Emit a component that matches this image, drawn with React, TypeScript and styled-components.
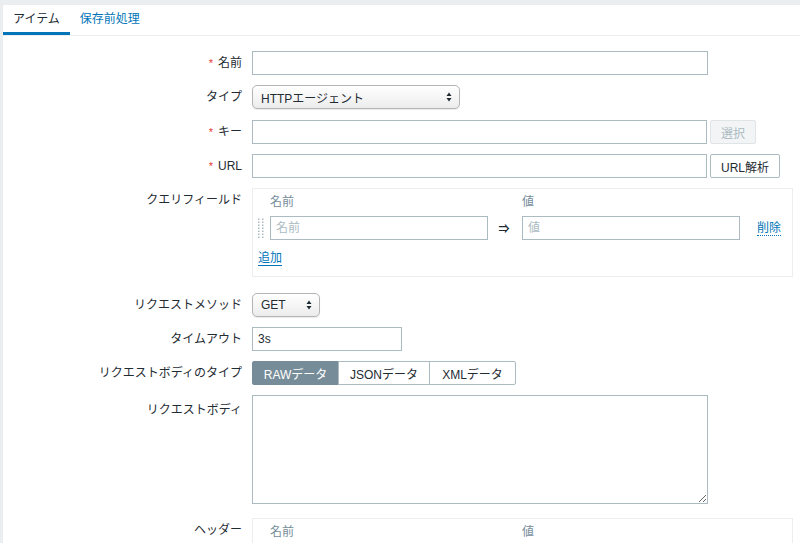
import React from "react";
import styled, { createGlobalStyle, css } from "styled-components";

const GlobalStyle = createGlobalStyle`
  html, body {
    margin: 0;
    padding: 0;
    background: #ebeef0;
  }
  body {
    font-family: "Liberation Sans", Arial, "Noto Sans CJK JP", sans-serif;
    font-size: 12px;
    color: #1f2c33;
  }
  * { box-sizing: border-box; }
`;

const Page = styled.div`
  padding: 5px 0 0 3px;
  height: 543px;
  overflow: hidden;
`;

const Panel = styled.div`
  background: #ffffff;
  min-height: 538px;
`;

const TabBar = styled.ul`
  list-style: none;
  margin: 0;
  padding: 0;
  display: flex;
  height: 31px;
  border-bottom: 1px solid #ebeef0;
`;

const Tab = styled.li<{ $active?: boolean }>`
  padding: 0 10px;
  line-height: 28px;
  font-size: 12px;
  border-bottom: 3px solid ${(p) => (p.$active ? "#0275b8" : "transparent")};
  color: ${(p) => (p.$active ? "#1f2c33" : "#0275b8")};
`;

const Form = styled.div`
  display: grid;
  grid-template-columns: 239px 1fr;
  column-gap: 10px;
  row-gap: 10px;
  padding: 15px 7px 0 0;
`;

const Label = styled.div<{ $offset?: number }>`
  text-align: right;
  line-height: 24px;
  padding-top: ${(p) => p.$offset ?? 0}px;
  white-space: nowrap;
`;

const Req = styled.span`
  color: #e33734;
  margin-right: 5px;
  font-size: 11px;
`;

const Field = styled.div<{ $height?: number }>`
  display: flex;
  align-items: flex-start;
  height: ${(p) => p.$height ?? 24}px;
`;

const TextInput = styled.input<{ $width: number }>`
  width: ${(p) => p.$width}px;
  height: 24px;
  border: 1px solid #acbbc2;
  border-radius: 0;
  padding: 0 5px;
  font: inherit;
  color: #1f2c33;
  background: #fff;
  outline: none;
  &::placeholder {
    color: #acbbc2;
  }
`;

const SelectBox = styled.div<{ $width: number }>`
  width: ${(p) => p.$width}px;
  height: 24px;
  border: 1px solid #b4b4b4;
  border-radius: 5px;
  background: linear-gradient(#ffffff, #ececec);
  box-shadow: 0 1px 1px rgba(0, 0, 0, 0.08);
  display: flex;
  align-items: center;
  justify-content: space-between;
  padding: 0 7px 0 8px;
  color: #1f2c33;
`;

const Button = styled.button<{ $disabled?: boolean }>`
  height: 24px;
  margin-left: 3px;
  padding: 0 10px;
  font: inherit;
  border-radius: 2px;
  ${(p) =>
    p.$disabled
      ? css`
          border: 1px solid #dfe4e7;
          background: #f2f4f5;
          color: #acbbc2;
        `
      : css`
          border: 1px solid #acbbc2;
          background: #fff;
          color: #1f2c33;
        `}
`;

const TableBox = styled.div<{ $gapBelow?: number }>`
  border: 1px solid #ebeef0;
  padding: 6px 5px 10px 5px;
  margin-bottom: ${(p) => p.$gapBelow ?? 0}px;
`;

const PairRow = styled.div<{ $head?: boolean }>`
  display: grid;
  grid-template-columns: 12px 218px 34px 218px auto;
  align-items: center;
  ${(p) =>
    p.$head &&
    css`
      color: #768d99;
      line-height: 15px;
      padding-bottom: 6px;
    `}
`;

const HandleCell = styled.div`
  display: flex;
  align-items: center;
`;

const Arrow = styled.div`
  text-align: center;
  font-size: 11px;
  font-weight: bold;
  padding-right: 2px;
`;

const LinkAction = styled.span<{ $dotted?: boolean }>`
  color: #0275b8;
  border-bottom: 1px ${(p) => (p.$dotted ? "dotted" : "solid")} #0275b8;
  line-height: 14px;
  display: inline-block;
`;

const RemoveCell = styled.div`
  padding-left: 17px;
`;

const AddRow = styled.div`
  margin-top: 11px;
`;

const Segmented = styled.div`
  display: flex;
  height: 24px;
`;

const Segment = styled.div<{ $active?: boolean; $width: number }>`
  width: ${(p) => p.$width}px;
  display: flex;
  align-items: center;
  justify-content: center;
  border: 1px solid ${(p) => (p.$active ? "#768d99" : "#acbbc2")};
  margin-left: -1px;
  background: ${(p) => (p.$active ? "#768d99" : "#fff")};
  color: ${(p) => (p.$active ? "#fff" : "#1f2c33")};
  &:first-child {
    margin-left: 0;
    border-radius: 2px 0 0 2px;
  }
  &:last-child {
    border-radius: 0 2px 2px 0;
  }
`;

const TextArea = styled.textarea`
  width: 456px;
  height: 109px;
  border: 1px solid #acbbc2;
  font: inherit;
  display: block;
  margin-bottom: 4px;
  outline: none;
`;

const Updown = () => (
  <svg width="6" height="10" viewBox="0 0 6 10">
    <path d="M3 0.5 L5.5 4 H0.5 Z" fill="#1f2c33" />
    <path d="M3 9.5 L5.5 6 H0.5 Z" fill="#1f2c33" />
  </svg>
);

const DragHandle = () => (
  <svg width="6" height="20" viewBox="0 0 6 20">
    {[0, 1, 2, 3, 4, 5, 6].map((i) => (
      <g key={i} fill="#acbbc2">
        <rect x="0" y={i * 3 + 0.5} width="1.5" height="1.5" />
        <rect x="4" y={i * 3 + 0.5} width="1.5" height="1.5" />
      </g>
    ))}
  </svg>
);

const HeadRow = () => (
  <PairRow $head>
    <span />
    <span>名前</span>
    <span />
    <span>値</span>
  </PairRow>
);

export default function App() {
  return (
    <>
      <GlobalStyle />
      <Page>
        <Panel>
          <TabBar>
            <Tab $active>アイテム</Tab>
            <Tab>保存前処理</Tab>
          </TabBar>
          <Form>
            <Label>
              <Req>*</Req>名前
            </Label>
            <Field>
              <TextInput $width={456} />
            </Field>

            <Label>タイプ</Label>
            <Field $height={25}>
              <SelectBox $width={208}>
                <span>HTTPエージェント</span>
                <Updown />
              </SelectBox>
            </Field>

            <Label>
              <Req>*</Req>キー
            </Label>
            <Field>
              <TextInput $width={455} />
              <Button $disabled>選択</Button>
            </Field>

            <Label>
              <Req>*</Req>URL
            </Label>
            <Field>
              <TextInput $width={455} />
              <Button>URL解析</Button>
            </Field>

            <Label>クエリフィールド</Label>
            <TableBox $gapBelow={6}>
              <HeadRow />
              <PairRow>
                <HandleCell>
                  <DragHandle />
                </HandleCell>
                <TextInput $width={218} placeholder="名前" />
                <Arrow>⇒</Arrow>
                <TextInput $width={218} placeholder="値" />
                <RemoveCell>
                  <LinkAction $dotted>削除</LinkAction>
                </RemoveCell>
              </PairRow>
              <AddRow>
                <LinkAction>追加</LinkAction>
              </AddRow>
            </TableBox>

            <Label>リクエストメソッド</Label>
            <Field>
              <SelectBox $width={68}>
                <span>GET</span>
                <Updown />
              </SelectBox>
            </Field>

            <Label>タイムアウト</Label>
            <Field>
              <TextInput $width={150} defaultValue="3s" />
            </Field>

            <Label>リクエストボディのタイプ</Label>
            <Segmented>
              <Segment $active $width={87}>RAWデータ</Segment>
              <Segment $width={92}>JSONデータ</Segment>
              <Segment $width={87}>XMLデータ</Segment>
            </Segmented>

            <Label $offset={3}>リクエストボディ</Label>
            <div>
              <TextArea />
            </div>

            <Label>ヘッダー</Label>
            <TableBox>
              <HeadRow />
            </TableBox>
          </Form>
        </Panel>
      </Page>
    </>
  );
}
